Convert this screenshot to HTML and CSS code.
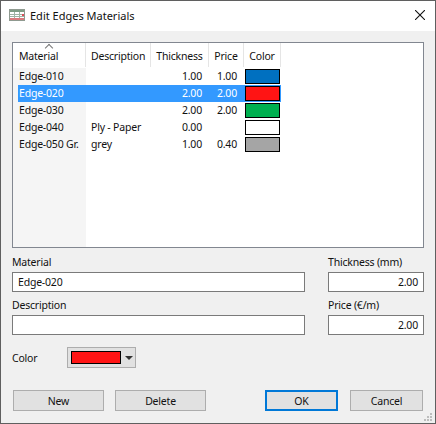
FILE: index.html
```html
<!DOCTYPE html>
<html lang="en">

<head>
    <meta charset="UTF-8">
    <title>Edit Edges Materials</title>
    <link rel="stylesheet" href="styles.css">
</head>

<body>
    <div class="dialog">
        <div class="titlebar">
            <svg class="app-icon" width="16" height="12" viewBox="0 0 16 12">
                <rect x="0.5" y="0.5" width="15" height="11" fill="#fff" stroke="#8f9a90" />
                <rect x="1" y="1" width="14" height="2" fill="#7d9c84" />
                <rect x="1" y="9" width="14" height="2" fill="#d9797c" />
                <path d="M1 5.5H15M1 7.5H15M5.5 3V9M10.5 3V9" stroke="#9fb3a4" />
                <rect x="13" y="5" width="2" height="2" fill="#d9505a" />
            </svg>
            <span class="title">Edit Edges Materials</span>
            <svg class="close" width="10" height="10" viewBox="0 0 10 10">
                <path d="M0 0L10 10M10 0L0 10" stroke="#111" stroke-width="1.1" />
            </svg>
        </div>

        <div class="content">
            <div class="list">
                <div class="row head">
                    <div class="cell c-material">Material<span class="sort"></span></div>
                    <div class="cell c-desc">Description</div>
                    <div class="cell c-thick center">Thickness</div>
                    <div class="cell c-price center">Price</div>
                    <div class="cell c-color center">Color</div>
                </div>
                <div class="rows">
                    <div class="row">
                        <div class="cell c-material">Edge-010</div>
                        <div class="cell c-desc"></div>
                        <div class="cell c-thick num">1.00</div>
                        <div class="cell c-price num">1.00</div>
                        <div class="cell c-color"><span class="swatch blue"></span></div>
                    </div>
                    <div class="row selected">
                        <div class="cell c-material">Edge-020</div>
                        <div class="cell c-desc"></div>
                        <div class="cell c-thick num">2.00</div>
                        <div class="cell c-price num">2.00</div>
                        <div class="cell c-color"><span class="swatch red"></span></div>
                    </div>
                    <div class="row">
                        <div class="cell c-material">Edge-030</div>
                        <div class="cell c-desc"></div>
                        <div class="cell c-thick num">2.00</div>
                        <div class="cell c-price num">2.00</div>
                        <div class="cell c-color"><span class="swatch green"></span></div>
                    </div>
                    <div class="row">
                        <div class="cell c-material">Edge-040</div>
                        <div class="cell c-desc">Ply - Paper</div>
                        <div class="cell c-thick num">0.00</div>
                        <div class="cell c-price num"></div>
                        <div class="cell c-color"><span class="swatch white"></span></div>
                    </div>
                    <div class="row">
                        <div class="cell c-material">Edge-050 Gr.</div>
                        <div class="cell c-desc">grey</div>
                        <div class="cell c-thick num">1.00</div>
                        <div class="cell c-price num">0.40</div>
                        <div class="cell c-color"><span class="swatch gray"></span></div>
                    </div>
                </div>
            </div>

            <div class="fields">
                <div class="field">
                    <label>Material</label>
                    <div class="input">Edge-020</div>
                </div>
                <div class="field">
                    <label>Thickness (mm)</label>
                    <div class="input right">2.00</div>
                </div>
                <div class="field">
                    <label>Description</label>
                    <div class="input"></div>
                </div>
                <div class="field">
                    <label>Price (€/m)</label>
                    <div class="input right">2.00</div>
                </div>
            </div>

            <div class="color-row">
                <label>Color</label>
                <div class="combo">
                    <span class="combo-swatch"></span>
                    <span class="arrow"></span>
                </div>
            </div>

            <div class="buttons">
                <button class="btn left-btn">New</button>
                <button class="btn left-btn">Delete</button>
                <div class="spacer"></div>
                <button class="btn ok">OK</button>
                <button class="btn cancel">Cancel</button>
            </div>
        </div>

        <svg class="grip" width="10" height="10" viewBox="0 0 10 10">
            <path d="M7 1h2v2H7zM4 4h2v2H4zM7 4h2v2H7zM1 7h2v2H1zM4 7h2v2H4zM7 7h2v2H7z" fill="#bdbdbd" />
        </svg>
    </div>
</body>

</html>
```

FILE: styles.css
```css
* {
    box-sizing: border-box;
}

html,
body {
    margin: 0;
    padding: 0;
}

body {
    font-family: "Noto Sans", sans-serif;
    font-size: 10.5px;
    letter-spacing: -0.2px;
    color: #111;
}

.dialog {
    position: relative;
    width: 436px;
    height: 424px;
    border: 1px solid #5f5f5f;
    background-color: #f0f0f0;
}

.titlebar {
    display: flex;
    align-items: center;
    height: 30px;
    padding: 0 10px 0 8px;
    background-color: #fff;
}

.app-icon {
    margin: 0 5px 2px 0;
}

.title {
    flex: 1;
    margin-bottom: 2px;
    font-size: 11px;
    letter-spacing: 0;
}

.close {
    margin-bottom: 2px;
}

.content {
    padding: 11px 11px 0 11px;
}

.list {
    display: flex;
    flex-direction: column;
    height: 206px;
    border: 1px solid #828790;
    background-color: #fff;
}

.rows {
    flex: 1;
    background: linear-gradient(to right, #f5f5f5 73px, #fff 73px);
}

.row {
    display: flex;
    height: 17px;
    margin-left: 5px;
    line-height: 16px;
}

.row.head {
    flex: none;
    height: 25px;
    line-height: 26px;
}

.head .cell {
    border-right: 1px solid #e5e5e5;
    height: 24px;
}

.cell {
    padding: 0 7px 0 4px;
    white-space: nowrap;
    overflow: hidden;
}

.c-material {
    position: relative;
    width: 68px;
    padding: 0 0 0 1px;
}

.c-desc {
    width: 65px;
    padding: 0 0 0 5px;
}

.c-thick {
    width: 58px;
}

.c-price {
    width: 35px;
}

.c-color {
    width: 37px;
    padding: 1px;
}

.center {
    padding: 0;
    text-align: center;
}

.num {
    text-align: right;
}

.selected .cell {
    background-color: #3399ff;
    color: #fff;
}

.sort {
    position: absolute;
    left: 28px;
    top: 2px;
    width: 6px;
    height: 6px;
    border-left: 1px solid #777;
    border-top: 1px solid #777;
    transform: rotate(45deg);
}

.swatch {
    display: block;
    width: 35px;
    height: 15px;
    border: 1px solid #000;
}

.blue {
    background-color: #0070c0;
}

.red,
.combo-swatch {
    background-color: #ff1414;
}

.green {
    background-color: #00b050;
}

.white {
    background-color: #fff;
}

.gray {
    background-color: #a5a5a5;
}

.fields {
    display: grid;
    grid-template-columns: 293px 96px;
    column-gap: 23px;
    row-gap: 4px;
    margin-top: 5px;
}

.field label {
    display: block;
    height: 19px;
    line-height: 19px;
}

.input {
    height: 20px;
    line-height: 18px;
    padding: 0 5px;
    border: 1px solid #7a7a7a;
    background-color: #fff;
}

.right {
    text-align: right;
}

.color-row {
    display: flex;
    align-items: center;
    margin-top: 12px;
}

.color-row label {
    width: 55px;
}

.combo {
    display: flex;
    align-items: center;
    width: 69px;
    height: 21px;
    padding-left: 3px;
    border: 1px solid #adadad;
    background-color: #e1e1e1;
}

.combo-swatch {
    width: 50px;
    height: 13px;
    border: 1px solid #000;
}

.arrow {
    margin-left: 4px;
    border-left: 4px solid transparent;
    border-right: 4px solid transparent;
    border-top: 4px solid #333;
}

.buttons {
    display: flex;
    margin-top: 22px;
    padding-left: 1px;
}

.spacer {
    flex: 1;
}

.btn {
    height: 21px;
    padding: 0;
    border: 1px solid #adadad;
    background-color: #e1e1e1;
    font-family: inherit;
    font-size: inherit;
    letter-spacing: inherit;
    color: inherit;
}

.left-btn {
    width: 91px;
    margin-right: 11px;
}

.ok {
    width: 73px;
    border: 2px solid #0078d7;
    margin-right: 12px;
}

.cancel {
    width: 73px;
    margin-right: 1px;
}

.grip {
    position: absolute;
    right: 2px;
    bottom: 1px;
}
```
